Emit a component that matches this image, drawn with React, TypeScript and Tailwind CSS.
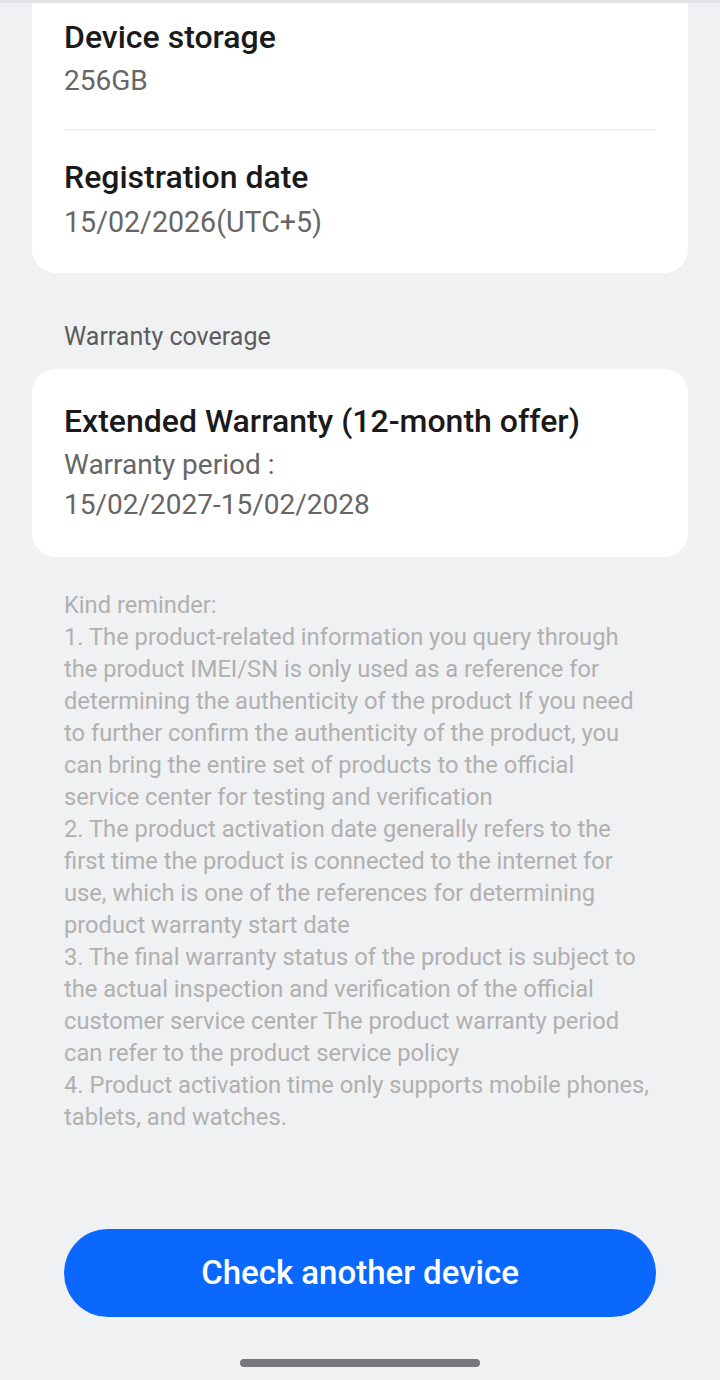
import React from "react";

const reminder = [
  "Kind reminder:",
  "1. The product-related information you query through",
  "the product IMEI/SN is only used as a reference for",
  "determining the authenticity of the product If you need",
  "to further confirm the authenticity of the product, you",
  "can bring the entire set of products to the official",
  "service center for testing and verification",
  "2. The product activation date generally refers to the",
  "first time the product is connected to the internet for",
  "use, which is one of the references for determining",
  "product warranty start date",
  "3. The final warranty status of the product is subject to",
  "the actual inspection and verification of the official",
  "customer service center The product warranty period",
  "can refer to the product service policy",
  "4. Product activation time only supports mobile phones,",
  "tablets, and watches.",
];

export default function App() {
  return (
    <div
      className="w-[720px] min-h-[1380px] bg-[#f0f1f3] flex flex-col"
      style={{ fontFamily: "Roboto, 'Noto Sans', sans-serif" }}
    >
      <div className="h-[3px] bg-[#e2e3e6]" />
      <div className="mx-8 bg-white rounded-b-[24px] px-8 pt-[14px] pb-[31px]">
        <div className="text-[32px] leading-[40px] font-medium text-[#1a1a1a]">Device storage</div>
        <div className="mt-[4px] text-[28px] leading-[40px] text-[#666]">256GB</div>
        <div className="mt-[28px] h-[2px] bg-[#f0f0f0]" />
        <div className="mt-[26px] text-[32px] leading-[40px] font-medium text-[#1a1a1a]">Registration date</div>
        <div className="mt-[5px] text-[28.6px] leading-[40px] text-[#666]">15/02/2026(UTC+5)</div>
      </div>
      <div className="mt-[48px] px-16 text-[25px] leading-[32px] text-[#5c5c5c]">Warranty coverage</div>
      <div className="mt-[16px] mx-8 bg-white rounded-[24px] px-8 pt-[32px] pb-[32px]">
        <div className="text-[32px] leading-[40px] font-medium text-[#1a1a1a]">Extended Warranty (12-month offer)</div>
        <div className="mt-[4px] text-[28px] leading-[40px] text-[#666]">Warranty period :</div>
        <div className="text-[28px] leading-[40px] text-[#666]">15/02/2027-15/02/2028</div>
      </div>
      <div className="mt-[32px] px-16 text-[23.7px] leading-[32px] text-[#b0b0b0]">
        {reminder.map((l, i) => (
          <div key={i} className="whitespace-nowrap">{l}</div>
        ))}
      </div>
      <div className="mt-[96px] px-16">
        <button className="w-full h-[88px] rounded-full bg-[#0a68ff] text-white text-[33px] font-medium">
          Check another device
        </button>
      </div>
      <div className="mt-[42px] flex justify-center">
        <div className="w-[240px] h-[8px] rounded-full bg-[#76777a]" />
      </div>
    </div>
  );
}
